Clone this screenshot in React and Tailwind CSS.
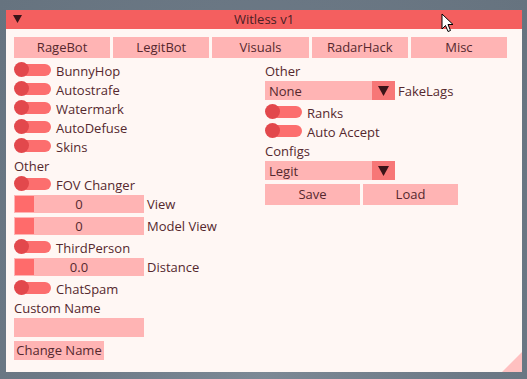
import React from "react";

const font = { fontFamily: '"Open Sans", "Liberation Sans", sans-serif' };

function Toggle({ label }) {
  return (
    <div className="flex h-[15px] items-center">
      <div className="relative h-[15px] w-[37px] shrink-0">
        <div className="absolute left-[6px] top-[2px] h-[12px] w-[31px] rounded-full bg-[#fc6e6e]" />
        <div className="absolute left-0 top-0 h-[15px] w-[15px] rounded-full bg-[#e2484c]" />
      </div>
      <span className="ml-[5px] translate-y-[2px] leading-none">{label}</span>
    </div>
  );
}

function Text({ children }) {
  return (
    <div className="flex h-[15px] items-center leading-none">
      <span className="translate-y-[2px]">{children}</span>
    </div>
  );
}

function Slider({ value, label }) {
  return (
    <div className="flex h-[18px] items-center">
      <div className="relative flex h-[18px] w-[130px] items-center justify-center bg-[#ffb4b4]">
        <div className="absolute left-[1px] top-[1px] h-[16px] w-[19px] bg-[#ff6b6b]" />
        <span className="relative leading-none">{value}</span>
      </div>
      <span className="ml-[3px] leading-none">{label}</span>
    </div>
  );
}

function Combo({ value, label }) {
  return (
    <div className="flex h-[19px] items-center">
      <div className="flex h-[19px] w-[130px] items-center bg-[#ffb4b4]">
        <span className="flex-1 translate-y-[1px] pl-[4px] leading-none">{value}</span>
        <div className="flex h-[19px] w-[23px] items-center justify-center bg-[#f77777]">
          <svg width="11" height="10" viewBox="0 0 11 10">
            <polygon points="0,0 11,0 5.5,10" fill="#3a1418" />
          </svg>
        </div>
      </div>
      {label && <span className="ml-[3px] translate-y-[1px] leading-none">{label}</span>}
    </div>
  );
}

export default function App() {
  return (
    <div
      className="relative h-[379px] w-[527px] overflow-hidden bg-[#6c7986] text-[13px] text-[#55282e]"
      style={font}
    >
      <div className="absolute inset-0 bg-[radial-gradient(ellipse_at_50%_100%,#7c8995_0%,#6c7986_55%,#66737f_100%)]" />
      {/* window */}
      <div className="absolute left-[6px] top-[10px] flex h-[362px] w-[516px] flex-col bg-[#fff7f4]">
        <div className="relative flex h-[19px] items-center justify-center bg-[#f45f5f]">
          <svg className="absolute left-[7px] top-[5px]" width="9" height="8" viewBox="0 0 9 8">
            <polygon points="0,0 9,0 4.5,8" fill="#3a1418" />
          </svg>
          <span className="leading-none text-[#4a2026]">Witless v1</span>
        </div>
        <div className="flex flex-col pl-[8px] pt-[8px]">
          <div className="flex w-[493px] gap-[3px]">
            {["RageBot", "LegitBot", "Visuals", "RadarHack", "Misc"].map((t) => (
              <div key={t} className="flex h-[21px] flex-1 items-center justify-center bg-[#ffb4b4] leading-none">
                {t}
              </div>
            ))}
          </div>
          <div className="mt-[4px] flex">
            <div className="flex w-[251px] flex-col gap-[4px]">
              <Toggle label="BunnyHop" />
              <Toggle label="Autostrafe" />
              <Toggle label="Watermark" />
              <Toggle label="AutoDefuse" />
              <Toggle label="Skins" />
              <Text>Other</Text>
              <Toggle label="FOV Changer" />
              <Slider value="0" label="View" />
              <Slider value="0" label="Model View" />
              <Toggle label="ThirdPerson" />
              <Slider value="0.0" label="Distance" />
              <Toggle label="ChatSpam" />
              <Text>Custom Name</Text>
              <div className="h-[19px] w-[130px] bg-[#ffb4b4]" />
              <div className="flex h-[19px] w-[90px] items-center justify-center bg-[#ffb4b4] leading-none">
                Change Name
              </div>
            </div>
            <div className="flex flex-col gap-[4px]">
              <Text>Other</Text>
              <Combo value="None" label="FakeLags" />
              <Toggle label="Ranks" />
              <Toggle label="Auto Accept" />
              <Text>Configs</Text>
              <Combo value="Legit" />
              <div className="flex gap-[3px]">
                <div className="flex h-[21px] w-[95px] items-center justify-center bg-[#ffb4b4] leading-none">Save</div>
                <div className="flex h-[21px] w-[95px] items-center justify-center bg-[#ffb4b4] leading-none">Load</div>
              </div>
            </div>
          </div>
        </div>
        <svg className="absolute bottom-0 right-0" width="20" height="20" viewBox="0 0 20 20">
          <polygon points="20,0 20,20 0,20" fill="#ffc0c0" />
        </svg>
      </div>
      {/* cursor */}
      <svg className="absolute left-[441px] top-[13px]" width="14" height="20" viewBox="0 0 14 20">
        <path d="M1 1 L1 16 L4.5 12.5 L7 18.5 L9.5 17.5 L7 11.5 L12 11.5 Z" fill="#fff" stroke="#000" strokeWidth="1" strokeLinejoin="round" />
      </svg>
    </div>
  );
}
